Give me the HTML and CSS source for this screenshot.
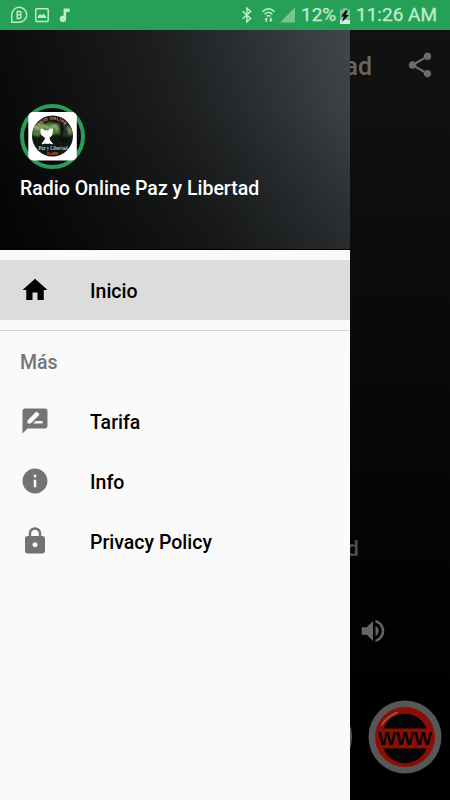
FILE: index.html
```html
<!DOCTYPE html>
<html lang="es">
<head>
<meta charset="utf-8">
<title>Radio Online Paz y Libertad</title>
<link rel="stylesheet" href="styles.css">
</head>
<body>
<div class="screen">
  <header class="status">
    <svg class="status-left" width="76" height="30" viewBox="0 0 76 30" fill="none" stroke="currentColor">
      <path d="M11.7 22.3V15a7.5 7.5 0 1 1 7.5 7.3z" stroke-width="1.4"/>
      <path d="M17.2 11.500v7h2.400a1.900 1.900 0 0 0 0-3.700h-2.400 2.200a1.600 1.600 0 0 0 0-3.300z" stroke-width="1.400"/>
      <rect x="35.800" y="8.800" width="12.400" height="12.800" rx="1" stroke-width="1.500"/>
      <path d="M38 18v-2l2-2 1.600 1.300 2-1.600 2.500 2.600V18z" fill="currentColor" stroke="none"/>
      <path d="M63.600 8.500h6v3.400h-3.500v7a3.200 3.200 0 1 1-2.500-3.100z" fill="currentColor" stroke="none"/>
    </svg>
    <div class="status-right">
      <svg width="56" height="30" viewBox="240 0 56 30" fill="none" stroke="currentColor">
        <path d="M242.600 11.200l8 7.400-3.700 3.200V8.200l3.700 3.200-8 7.400" stroke-width="1.500"/>
        <path d="M262.400 11.800q6.100-6.200 12.200 0M264.600 14.200q3.900-3.800 7.800 0M266.600 16.400q1.900-1.700 3.800 0" stroke-width="1.500"/>
        <path d="M264.200 19.600l2-2.200 2 2.200h-1.300v2.400h-1.400v-2.400zM268.800 19.800l2 2.200 2-2.200h-1.300v-2.400h-1.400v2.400z" fill="currentColor" stroke="none"/>
        <path d="M295 7.500v15h-15z" fill="#78c497" stroke="none"/>
      </svg>
      <span class="battery-level">12%</span>
      <svg class="battery" width="10" height="16" viewBox="0 0 10 16">
        <path d="M3 0h4v1.500h3V16H0V1.500h3z" fill="#78c497"/>
        <path d="M0 12h10v4H0z" fill="#d0f2dc"/>
        <path d="M5.400 2.500L1 8.500h2.800L2 14l7-7H5.800l2-4.500z" fill="#061008"/>
      </svg>
      <span class="clock">11:26 AM</span>
    </div>
  </header>

  <main class="player">
    <div class="toolbar">
      <h1>Libertad</h1>
      <svg width="30" height="30" viewBox="0 0 24 24" fill="currentColor"><path d="M18 16.080c-.76 0-1.440.3-1.960.77L8.910 12.700c.05-.23.09-.46.09-.7s-.04-.47-.09-.7l7.050-4.110c.54.5 1.250.81 2.040.81 1.660 0 3-1.340 3-3s-1.340-3-3-3-3 1.340-3 3c0 .24.04.47.09.7L8.040 9.810C7.500 9.310 6.790 9 6 9c-1.660 0-3 1.340-3 3s1.340 3 3 3c.79 0 1.500-.31 2.040-.81l7.120 4.160c-.05.21-.08.43-.08.65 0 1.610 1.310 2.920 2.920 2.920s2.920-1.310 2.920-2.920-1.310-2.920-2.920-2.920z"/></svg>
    </div>
    <div class="now-playing">Libertad</div>
    <div class="volume">
      <svg width="30" height="30" viewBox="0 0 24 24" fill="currentColor"><path d="M3 9v6h4l5 5V4L7 9H3zm13.500 3c0-1.770-1.020-3.290-2.500-4.030v8.050c1.480-.73 2.500-2.250 2.500-4.020zM14 3.230v2.060c2.890.86 5 3.540 5 6.710s-2.110 5.850-5 6.710v2.060c4.010-.91 7-4.490 7-8.770s-2.990-7.860-7-8.770z"/></svg>
    </div>
    <div class="links">
      <span class="link-ring"></span>
      <svg width="74" height="74" viewBox="0 0 74 74">
        <circle cx="37" cy="37" r="36.500" fill="#575757"/>
        <circle cx="37" cy="37" r="30" fill="#8a0e06"/>
        <path d="M15.500 28.500a23 23 0 0 1 43 0zM15.500 48.500a23 23 0 0 0 43 0z" fill="#050505"/>
        <path d="M14 25q4-8 15-12.500" fill="none" stroke="#8a6560" stroke-width="1.500" stroke-linecap="round"/>
        <text x="37" y="44.500" text-anchor="middle" textLength="54" lengthAdjust="spacingAndGlyphs" class="www">WWW</text>
      </svg>
    </div>
  </main>

  <aside class="drawer">
    <div class="account">
      <svg class="avatar" width="65" height="65" viewBox="0 0 65 65">
        <defs>
          <clipPath id="disc"><circle cx="32.500" cy="32" r="20.500"/></clipPath>
          <filter id="soft"><feGaussianBlur stdDeviation="1"/></filter>
          <path id="arc" d="M17 25a17.500 17.500 0 0 1 31 0"/>
        </defs>
        <circle cx="32.500" cy="32.500" r="30.500" fill="#080a09" stroke="#289c58" stroke-width="4"/>
        <rect x="8.300" y="8" width="48.500" height="48.500" rx="5" fill="#fff"/>
        <g clip-path="url(#disc)">
          <path d="M10 10h45v45H10z" fill="#10180f"/>
          <g filter="url(#soft)">
            <path d="M12 21l7-3 6 2 5-2 7 2 5-3 10 9 1 5-8 1-8-2-6 1-7-2-6 4-9-3z" fill="#4f7d3c"/>
            <path d="M14 23l5 2 4-4 7 4 5-4 3 5M47 21l4 7" fill="none" stroke="#a3c080" stroke-width="1.700"/>
            <path d="M39 18l4-6 5 6v15l-3 6-5-5z" fill="#0c1010"/>
            <path d="M43 20l3 3-2 10" fill="none" stroke="#536260"/>
          </g>
          <path d="M21 25q3-.5 4 2.500l1.500-1.500 1.500 1.500q1-3 4.500-2.500l-.5 5q-1 3-3 3.500l.5 2.500 3 4-3-1-2 .5-2.500-.5-3 1 3.500-5-.5-2q-3.500-1-4-4z" fill="#fff" stroke="#fff"/>
        </g>
        <text class="logo-arc"><textPath href="#arc" textLength="33">RADIO ONLINE</textPath></text>
        <text x="33" y="45.500" text-anchor="middle" textLength="29" lengthAdjust="spacingAndGlyphs" class="logo-name">Paz y Libertad</text>
        <text x="32.500" y="51" text-anchor="middle" textLength="11" class="logo-foot">EL AIRE</text>
      </svg>
      <div class="account-name">Radio Online Paz y Libertad</div>
    </div>
    <nav>
      <a class="item active">
        <svg width="30" height="30" viewBox="0 0 24 24" fill="currentColor"><path d="M10 20v-6h4v6h5v-8h3L12 3 2 12h3v8z"/></svg>
        <span>Inicio</span>
      </a>
      <div class="section">Más</div>
      <a class="item">
        <svg width="30" height="30" viewBox="0 0 24 24" fill="currentColor"><path d="M20 2H4c-1.100 0-1.990.9-1.990 2L2 22l4-4h14c1.100 0 2-.9 2-2V4c0-1.100-.9-2-2-2zM6 14v-2.470l6.880-6.880c.2-.2.51-.2.71 0l1.770 1.770c.2.2.2.51 0 .71L8.470 14H6zm12 0h-7.500l2-2H18v2z"/></svg>
        <span>Tarifa</span>
      </a>
      <a class="item">
        <svg width="30" height="30" viewBox="0 0 24 24" fill="currentColor"><path d="M12 2C6.480 2 2 6.480 2 12s4.480 10 10 10 10-4.480 10-10S17.520 2 12 2zm1 15h-2v-6h2v6zm0-8h-2V7h2v2z"/></svg>
        <span>Info</span>
      </a>
      <a class="item">
        <svg width="30" height="30" viewBox="0 0 24 24" fill="currentColor"><path d="M18 8h-1V6c0-2.760-2.240-5-5-5S7 3.240 7 6v2H6c-1.100 0-2 .9-2 2v10c0 1.100.9 2 2 2h12c1.100 0 2-.9 2-2V10c0-1.100-.9-2-2-2zm-6 9c-1.100 0-2-.9-2-2s.9-2 2-2 2 .9 2 2-.9 2-2 2zm3.100-9H8.900V6c0-1.710 1.390-3.100 3.100-3.100 1.710 0 3.100 1.390 3.100 3.100v2z"/></svg>
        <span>Privacy Policy</span>
      </a>
    </nav>
  </aside>
</div>
</body>
</html>
```
FILE: styles.css
```css
* { box-sizing: border-box; }
body { margin: 0; font-family: Roboto, "Liberation Sans", sans-serif; }
svg { display: block; flex: none; }

.screen {
  position: relative;
  width: 450px;
  height: 800px;
  overflow: hidden;
  display: flex;
  flex-direction: column;
  background: #000;
}

.status {
  height: 30px;
  flex: none;
  display: flex;
  justify-content: space-between;
  background: #26a057;
  color: #bdecce;
}
.status-right {
  display: flex;
  align-items: center;
  padding-right: 13px;
  font-size: 19px;
  line-height: 30px;
  white-space: nowrap;
  -webkit-text-stroke: .3px currentColor;
}
.battery-level { width: 44px; padding-left: 5px; }
.battery { margin-top: 1px; }
.clock { width: 81px; margin-left: 6px; }

.player {
  flex: 1;
  display: flex;
  flex-direction: column;
  background: linear-gradient(#121212 0, #0c0c0c 220px, #040404 510px, #000 700px);
  color: #666;
}
.toolbar {
  height: 70px;
  display: flex;
  align-items: center;
  justify-content: flex-end;
  gap: 33px;
  padding-right: 15px;
}
.toolbar h1 { margin: 2px 0 0; font-size: 25px; font-weight: 500; }
.toolbar svg { color: #6b6b6b; }
.now-playing {
  margin-top: 434px;
  padding-right: 91px;
  text-align: right;
  font-size: 22px;
  line-height: 30px;
  font-weight: 500;
  color: #505050;
}
.volume {
  display: flex;
  justify-content: flex-end;
  margin-top: 52px;
  padding-right: 62px;
}
.links {
  display: flex;
  justify-content: flex-end;
  gap: 16px;
  margin-top: 54px;
  padding-right: 8px;
}
.link-ring { width: 74px; height: 74px; border: 5px solid #575757; border-radius: 50%; }
.www { font: bold 19px "Liberation Sans", sans-serif; fill: #080303; }

.drawer {
  position: absolute;
  left: 0;
  top: 30px;
  width: 350px;
  height: 770px;
  background: #fafafa;
}
.account {
  height: 220px;
  padding: 74px 20px 0;
  border-bottom: 1px solid #000;
  background:
    linear-gradient(to bottom, transparent 35%, rgba(0, 0, 0, .22)),
    linear-gradient(72deg, #030404 0, #101111 28%, #1c1e1f 53%, #303437 79%, #414749 100%);
}
.account-name {
  margin-top: 5px;
  font-size: 19.5px;
  line-height: 30px;
  font-weight: 500;
  color: #fff;
  white-space: nowrap;
}
.logo-arc { font: bold 4px "Liberation Sans", sans-serif; fill: #ed9a8c; }
.logo-name { font: bold 7px "Liberation Serif", serif; fill: #a7c9df; }
.logo-foot { font: bold 3px "Liberation Sans", sans-serif; fill: #c55b4a; }

nav { padding-top: 10px; }
.item {
  display: flex;
  align-items: center;
  gap: 40px;
  height: 60px;
  padding: 0 20px;
  font-size: 19.5px;
  font-weight: 500;
  color: #000;
}
.item span { padding-top: 2px; }
.item svg { color: #737373; }
.item.active { background: #dcdcdc; }
.item.active svg { color: #000; }
.section {
  height: 61px;
  margin-top: 10px;
  padding: 2px 20px 0;
  border-top: 1px solid #d3d3d3;
  font-size: 19.5px;
  line-height: 60px;
  font-weight: 500;
  color: #757575;
}
```
